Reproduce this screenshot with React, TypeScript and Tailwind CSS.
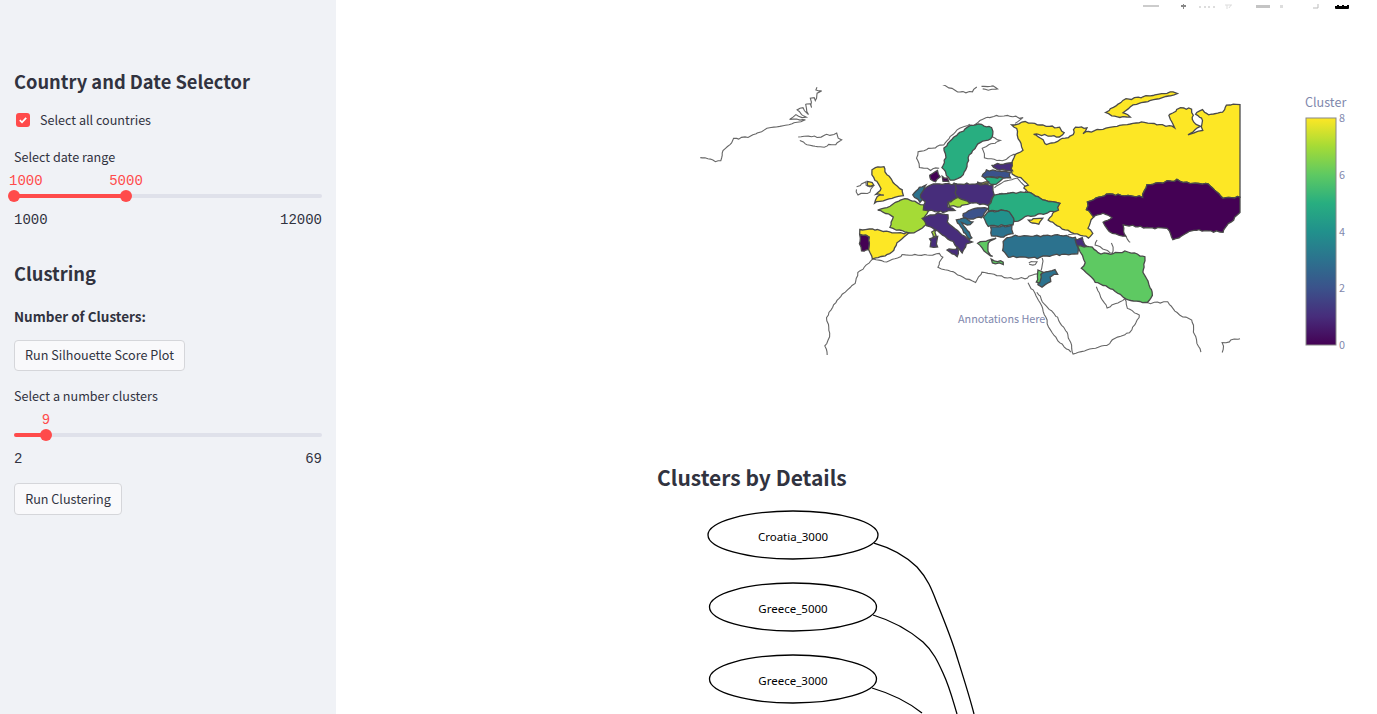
const V = ["#440154", "#472d7b", "#3b528b", "#2c728e", "#21918c", "#28ae80", "#5ec962", "#a5db36", "#fde725"];

// the source map is high-res: add a small position based wobble so coasts read as jagged,
// shared borders get the same offset since it only depends on x,y
const rough = (pts: string, closed = false) => {
  const p = pts.split(" ").map((s) => s.split(",").map(Number));
  if (closed) p.push(p[0]);
  const out: string[] = [];
  for (let i = 0; i < p.length - 1; i++) {
    const [x0, y0] = p[i];
    const [x1, y1] = p[i + 1];
    const n = Math.max(1, Math.round(Math.hypot(x1 - x0, y1 - y0) / 3));
    for (let k = 0; k < n; k++) {
      const x = x0 + ((x1 - x0) * k) / n;
      const y = y0 + ((y1 - y0) * k) / n;
      const dx = x >= 1239 ? 0 : Math.sin(x * 1.9 + y * 1.3) * 0.4 + Math.sin(x * 0.47 - y * 0.71) * 0.5;
      const dy = Math.sin(x * 1.1 - y * 2.1) * 0.4 + Math.sin(x * 0.63 + y * 0.37) * 0.5;
      out.push(`${(x + dx).toFixed(1)},${(y + dy).toFixed(1)}`);
    }
  }
  return out.join(" ");
};

// filled countries: cluster index + outline, in page pixels
const countries: [number, string][] = [
  [8, "1012,125 1025,122 1040,125 1060,128 1064,133 1060,137 1033,134 1040,138 1047,145 1060,140 1073,135 1075,127 1087,128 1083,133 1117,126 1130,124 1142,122 1175,127 1168,116 1180,108 1192,109 1193,123 1200,127 1188,135 1202,130 1202,118 1195,115 1202,110 1208,115 1223,112 1227,105 1240,104 1240,197 1223,198 1208,184 1187,183 1177,180 1147,185 1142,197 1107,194 1088,202 1087,209 1093,217 1088,228 1093,233 1088,238 1063,229 1048,220 1059,203 1043,200 1027,192 1023,188 1028,185 1020,178 1012,175 1010,167 1015,155 1023,150 1018,138 1017,128"],
  [8, "1106,113 1123,100 1173,92 1177,94 1133,105 1123,112 1130,117 1117,117"],
  [8, "1028,220 1042,218 1038,224 1032,223"],
  [0, "1240,197 1223,198 1208,184 1187,183 1177,180 1147,185 1142,197 1107,194 1088,202 1087,209 1093,217 1103,213 1112,217 1103,223 1110,232 1125,237 1123,225 1150,228 1167,228 1173,240 1193,230 1223,232 1227,225 1233,220 1240,213"],
  [5, "970,126 978,124 992,128 993,137 978,144 969,155 967,167 961,178 957,179 951,180 946,175 942,167 946,157 944,148 958,134"],
  [0, "930,175 938,170 940,177 935,182 930,180"],
  [0, "942,177 948,178 948,182 943,181"],
  [8, "872,169 884,166 885,172 891,179 895,185 902,190 904,195 889,199 874,203 877,197 884,195 876,194 881,188 879,184 875,180 872,175"],
  [8, "867,182 873,182 873,185 868,186"],
  [3, "912,195 920,187 925,186 924,197 920,202"],
  [7, "878,210 890,206 904,198 924,205 929,211 925,217 926,224 920,230 910,233 890,228 893,217"],
  [1, "922,193 927,187 933,184 955,184 956,192 958,198 948,202 948,207 955,210 943,212 923,210 925,202 920,198"],
  [1, "955,184 975,184 992,185 994,195 988,205 973,203 958,198 956,192"],
  [7, "948,202 958,198 970,203 960,207 950,206"],
  [2, "963,213 975,208 988,208 982,217 970,219 964,218"],
  [1, "922,218 938,213 948,215 948,222 962,235 972,242 967,244 962,252 953,242 943,235 927,225"],
  [1, "947,250 958,248 958,256 952,254"],
  [1, "930,238 937,237 937,247 931,247"],
  [7, "932,232 935,229 936,236 933,237"],
  [3, "957,220 963,218 973,222 970,225 962,223 972,238 970,239 960,227"],
  [8, "859,230 872,229 895,233 909,233 897,242 894,250 885,256 872,259 869,250 869,237 860,234"],
  [0, "860,234 869,237 869,250 861,251 860,244"],
  [4, "983,217 988,212 1007,210 1015,218 1013,225 988,226"],
  [3, "990,227 1012,226 1013,233 1003,237 992,236"],
  [5, "989,205 994,195 1010,193 1027,192 1043,200 1059,203 1058,210 1047,213 1025,217 1015,222 1013,218 1007,210 988,211"],
  [1, "992,165 1012,163 1012,171 995,169"],
  [2, "982,177 987,170 1010,172 1010,178 995,177"],
  [5, "985,177 1003,178 997,185 988,183"],
  [8, "977,183 988,182 988,184 977,184"],
  [6, "978,243 997,238 988,243 988,252 992,257 985,253"],
  [6, "992,260 1003,262 1003,264 993,263"],
  [3, "1003,245 1005,239 1012,236 1037,236 1060,235 1075,238 1078,245 1078,254 1053,255 1037,258 1020,257 1008,257 1003,250"],
  [1, "1075,240 1082,238 1087,247 1078,246"],
  [6, "1078,246 1093,247 1098,253 1113,254 1125,251 1145,257 1143,273 1148,282 1153,295 1148,303 1128,300 1113,290 1095,282 1082,268 1085,262"],
  [3, "1042,273 1055,270 1057,274 1050,277 1051,282 1042,287 1038,285"],
  [6, "1038,270 1042,272 1040,283 1037,282"],
];

// unfilled land, only the coast line shows
const outlines: string[] = [
  "700,158 708,158 715,161 721,161 723,150 732,143 733,139 748,137 758,133 767,128 783,126 806,120 790,119 796,115 806,118 797,110 803,108 808,115 805,105 810,103 812,108 810,98 814,97 816,101 817,93 821,91 816,90 817,85",
  "798,137 808,136 818,137 827,135 837,134 838,138 841,140 835,144 821,147 807,145 803,142 800,140 798,137",
  "943,85 957,92 972,92 978,85",
  "982,87 990,86 998,88 992,90 983,89 982,87",
  "970,124 957,130 943,145 918,152 917,158 920,167 930,170 942,167",
  "970,128 980,120 993,116 1010,116 1023,118 1012,125",
  "993,137 1000,140 983,148 985,158 1003,161 1013,155 1022,153",
  "857,187 865,182 867,186 873,186 870,192 858,195 856,192 857,187",
  "994,188 1003,182 1017,178 1027,188 1025,193 996,194",
  "828,355 825,346 830,337 827,318 835,303 845,292 855,283 858,272 873,259 887,262 903,255 933,255 940,253 942,258 938,268 953,272 975,282 982,272 1013,279 1027,278 1040,272",
  "1028,283 1040,303 1047,320 1050,330 1060,343 1073,354",
  "1037,292 1043,302 1057,318 1065,330 1070,340 1073,354 1087,350 1107,345 1115,338 1130,333 1140,315 1128,308 1125,298 1118,303 1107,308 1103,300 1095,285",
  "1148,303 1167,302 1180,315 1192,320 1195,337 1202,355",
  "1240,338 1223,343 1223,355",
  "1043,258 1042,267 1040,272",
  "1028,263 1037,261 1036,264 1029,265 1028,263",
  "1097,240 1095,245 1113,253 1112,240",
  "1067,235 1078,233 1090,235",
  "1125,237 1130,243 1127,246",
];

const ChoroplethMap = () => (
  <svg width="650" height="270" viewBox="700 85 650 270" className="block">
    <defs>
      <linearGradient id="viridis" x1="0" y1="1" x2="0" y2="0">
        {V.map((c, i) => (
          <stop key={c} offset={i / 8} stopColor={c} />
        ))}
      </linearGradient>
    </defs>
    {outlines.map((p) => (
      <polyline key={p} points={rough(p)} fill="none" stroke="#666" strokeWidth="1.1" />
    ))}
    {countries.map(([v, p]) => (
      <polygon key={p} points={rough(p, true)} fill={V[v]} stroke="#4a4a4a" strokeWidth="1.3" />
    ))}
    <text x="958" y="323" fontSize="10.8" fill="#7f88ad">
      Annotations Here
    </text>
    <text x="1305" y="107" fontSize="12.6" fill="#7f88ad">
      Cluster
    </text>
    <rect x="1306" y="118" width="30" height="227" fill="url(#viridis)" stroke="#888" strokeWidth="1" />
    {[
      ["8", 122],
      ["6", 179],
      ["4", 236],
      ["2", 292],
      ["0", 349],
    ].map(([t, y]) => (
      <text key={t} x="1339" y={y} fontSize="10.8" fill="#7f88ad">
        {t}
      </text>
    ))}
  </svg>
);

const ModeBar = () => (
  <svg width="210" height="10" viewBox="1143 0 210 10" className="block">
    <rect x="1143" y="5" width="16" height="2" fill="#ccc" />
    <rect x="1181" y="5" width="5" height="2" fill="#888" />
    <rect x="1183" y="4" width="1" height="5" fill="#888" />
    <rect x="1199" y="6" width="2" height="2" fill="#ddd" />
    <rect x="1204" y="6" width="2" height="2" fill="#ddd" />
    <rect x="1208" y="6" width="2" height="2" fill="#ddd" />
    <rect x="1213" y="6" width="2" height="2" fill="#ddd" />
    <path d="M1225 5h7M1227 5v4M1231 5l-2 3" stroke="#ddd" fill="none" />
    <rect x="1256" y="5" width="14" height="3" fill="#c4c4c4" />
    <rect x="1280" y="5" width="3" height="3" fill="#ddd" />
    <path d="M1313 8h5V4" stroke="#bbb" fill="none" />
    <path d="M1335 6h2v-1h2v1h3v-1h2v1h3v-1h2v3a1 1 0 0 1-1 1h-12a1 1 0 0 1-1-1z" fill="#000" />
  </svg>
);

const nodes: [string, number, number][] = [
  ["Croatia_3000", 535, 85],
  ["Greece_5000", 607, 83.5],
  ["Greece_3000", 679, 83.5],
];

const ClusterTree = () => (
  <svg width="340" height="212" viewBox="650 502 340 212" className="block">
    {nodes.map(([name, cy, rx]) => (
      <g key={name}>
        <ellipse cx="793" cy={cy} rx={rx} ry="24" fill="#fff" stroke="#000" strokeWidth="1.3" />
        <text x="793" y={cy + 6} textAnchor="middle" fontSize="11.5" fill="#000" className="font-['Noto_Sans',sans-serif]">
          {name}
        </text>
      </g>
    ))}
    <g fill="none" stroke="#000" strokeWidth="1.3">
      <path d="M874 543C895 549 908 558 917 567C928 579 932 590 937 603C946 625 952 640 957 657C963 676 970 698 974 714" />
      <path d="M873 615C893 621 910 631 923 642C933 651 938 662 943 673C950 688 953 701 957 714" />
      <path d="M872 688C889 693 907 701 922 713" />
    </g>
  </svg>
);

const Slider = ({
  left,
  right,
  low,
  high,
  highAt,
}: {
  left: string;
  right: string;
  low?: string;
  high: string;
  highAt: number;
}) => (
  <div>
    <div className="relative h-[37px]">
      <div className="absolute left-0 right-0 top-[21px] h-1 rounded-full bg-[#dfe1ea]" />
      <div className="absolute left-0 top-[21px] h-1 rounded-full bg-[#ff4b4b]" style={{ width: highAt }} />
      {low && (
        <>
          <div className="absolute left-[-6px] top-[17px] h-3 w-3 rounded-full bg-[#ff4b4b]" />
          <span className="absolute left-[-5px] top-[-2px] font-['Liberation_Mono',monospace] text-sm text-[#ff4b4b]">
            {low}
          </span>
        </>
      )}
      <div className="absolute top-[17px] h-3 w-3 rounded-full bg-[#ff4b4b]" style={{ left: highAt - 6 }} />
      <span
        className="absolute top-[-2px] -translate-x-1/2 font-['Liberation_Mono',monospace] text-sm text-[#ff4b4b]"
        style={{ left: highAt }}
      >
        {high}
      </span>
    </div>
    <div className="flex justify-between font-['Liberation_Mono',monospace] text-sm leading-5 text-[#31333f]">
      <span>{left}</span>
      <span>{right}</span>
    </div>
  </div>
);

const Sidebar = () => (
  <aside className="w-[336px] h-[714px] shrink-0 bg-[#f0f2f6] px-[14px] pt-[67px] text-[12.6px] text-[#31333f]">
    <h2 className="text-[18.3px] leading-7 font-semibold">Country and Date Selector</h2>
    <label className="mt-[15px] flex items-center gap-[10px] pl-[2px] leading-5">
      <span className="flex h-[14px] w-[14px] items-center justify-center rounded-[3px] bg-[#ff4b4b]">
        <svg width="10" height="10" viewBox="0 0 10 10" fill="none" stroke="#fff" strokeWidth="1.8">
          <path d="M1.8 5.2 4 7.3 8.2 2.8" />
        </svg>
      </span>
      Select all countries
    </label>
    <p className="mt-[17px] leading-5">Select date range</p>
    <div className="mt-[6px]">
      <Slider left="1000" right="12000" low="1000" high="5000" highAt={112} />
    </div>
    <h2 className="mt-[29px] text-[18.3px] leading-7 font-semibold">Clustring</h2>
    <p className="mt-[19px] text-[13.5px] leading-5 font-semibold">Number of Clusters:</p>
    <button className="mt-[14px] block h-[31px] w-[171px] rounded-[4px] border border-[#d5d6da] bg-[#f9f9fb]">
      Run Silhouette Score Plot
    </button>
    <p className="mt-[15px] leading-5">Select a number clusters</p>
    <div className="mt-[6px]">
      <Slider left="2" right="69" high="9" highAt={32} />
    </div>
    <button className="mt-[14px] block h-[32px] w-[108px] rounded-[4px] border border-[#d5d6da] bg-[#f9f9fb]">
      Run Clustering
    </button>
  </aside>
);

export default function App() {
  return (
    <div className="flex h-[714px] overflow-hidden bg-white font-['Noto_Sans_CJK_SC','Noto_Sans',sans-serif]">
      <Sidebar />
      <main className="flex-1 min-w-0">
        <div className="ml-[807px] w-[210px]">
          <ModeBar />
        </div>
        <div className="ml-[364px] mt-[75px]">
          <ChoroplethMap />
        </div>
        <h2 className="ml-[321px] mt-[106px] text-[21px] leading-8 font-semibold text-[#31333f]">
          Clusters by Details
        </h2>
        <div className="ml-[314px] mt-[9px]">
          <ClusterTree />
        </div>
      </main>
    </div>
  );
}
